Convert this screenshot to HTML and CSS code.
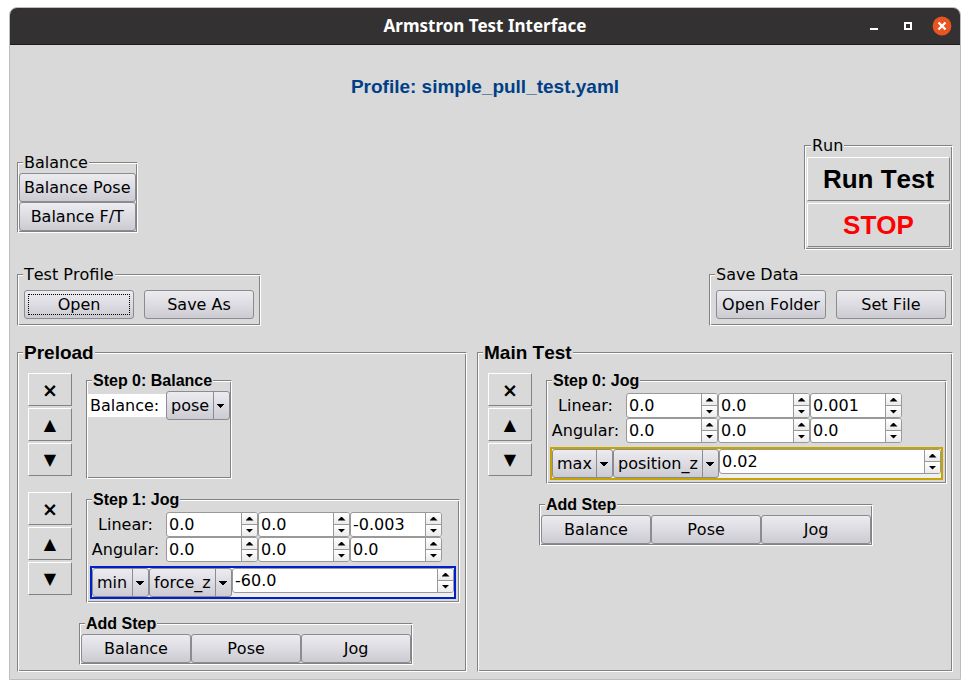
FILE: index.html
```html
<!DOCTYPE html>
<html lang="en">
<head>
<meta charset="utf-8">
<title>Armstron Test Interface</title>
<link rel="stylesheet" href="styles.css">
</head>
<body>
<div class="window">
  <header class="titlebar">
    <h1 class="title">Armstron Test Interface</h1>
    <div class="controls">
      <button class="control" aria-label="Minimize"><svg viewBox="0 0 20 20"><path d="M6 12h8v2H6z" fill="#fff"/></svg></button>
      <button class="control" aria-label="Maximize"><svg viewBox="0 0 20 20"><path d="M7 7h6v6H7z" fill="none" stroke="#fff" stroke-width="2"/></svg></button>
      <button class="control" aria-label="Close"><svg viewBox="0 0 20 20"><circle cx="10" cy="10" r="9.4" fill="#e95420"/><path d="M6.5 6.5l7 7M13.5 6.5l-7 7" stroke="#fff" stroke-width="2.4"/></svg></button>
    </div>
  </header>
  <main class="content">
    <h2 class="profile">Profile: simple_pull_test.yaml</h2>

    <div class="row row-run">
      <fieldset class="group stack">
        <legend>Balance</legend>
        <button class="btn">Balance Pose</button>
        <button class="btn">Balance F/T</button>
      </fieldset>
      <fieldset class="group stack run">
        <legend>Run</legend>
        <button class="flat big">Run Test</button>
        <button class="flat big stop">STOP</button>
      </fieldset>
    </div>

    <div class="row row-files">
      <fieldset class="group">
        <legend>Test Profile</legend>
        <div class="pair">
          <button class="btn focused">Open</button>
          <button class="btn">Save As</button>
        </div>
      </fieldset>
      <fieldset class="group">
        <legend>Save Data</legend>
        <div class="pair">
          <button class="btn">Open Folder</button>
          <button class="btn">Set File</button>
        </div>
      </fieldset>
    </div>

    <div class="panels">
      <fieldset class="group panel">
        <legend class="heading">Preload</legend>
        <div class="steps">
          <div class="step">
            <div class="tools">
              <button class="flat tool remove" aria-label="Remove step">×</button>
              <button class="flat tool" aria-label="Move up">▲</button>
              <button class="flat tool" aria-label="Move down">▼</button>
            </div>
            <fieldset class="group balance">
              <legend class="subheading">Step 0: Balance</legend>
              <div class="balance-row">
                <label class="white" for="bal">Balance:</label>
                <select class="combo" id="bal"><option>pose</option></select>
              </div>
            </fieldset>
          </div>
          <div class="step">
            <div class="tools">
              <button class="flat tool remove" aria-label="Remove step">×</button>
              <button class="flat tool" aria-label="Move up">▲</button>
              <button class="flat tool" aria-label="Move down">▼</button>
            </div>
            <fieldset class="group">
              <legend class="subheading">Step 1: Jog</legend>
              <div class="jog">
                <div class="vector">
                  <label for="p-lx">Linear:</label>
                  <span class="spin"><input id="p-lx" value="0.0"><button class="up" aria-label="Increase"></button><button class="down" aria-label="Decrease"></button></span>
                  <span class="spin"><input aria-label="Linear y" value="0.0"><button class="up" aria-label="Increase"></button><button class="down" aria-label="Decrease"></button></span>
                  <span class="spin"><input aria-label="Linear z" value="-0.003"><button class="up" aria-label="Increase"></button><button class="down" aria-label="Decrease"></button></span>
                  <label for="p-ax">Angular:</label>
                  <span class="spin"><input id="p-ax" value="0.0"><button class="up" aria-label="Increase"></button><button class="down" aria-label="Decrease"></button></span>
                  <span class="spin"><input aria-label="Angular y" value="0.0"><button class="up" aria-label="Increase"></button><button class="down" aria-label="Decrease"></button></span>
                  <span class="spin"><input aria-label="Angular z" value="0.0"><button class="up" aria-label="Increase"></button><button class="down" aria-label="Decrease"></button></span>
                </div>
                <div class="condition blue">
                  <select class="combo" aria-label="Condition"><option>min</option></select>
                  <select class="combo" aria-label="Signal"><option>force_z</option></select>
                  <span class="spin wide"><input aria-label="Limit" value="-60.0"><button class="up" aria-label="Increase"></button><button class="down" aria-label="Decrease"></button></span>
                </div>
              </div>
            </fieldset>
          </div>
          <fieldset class="group add">
            <legend class="subheading">Add Step</legend>
            <div class="trio">
              <button class="btn">Balance</button>
              <button class="btn">Pose</button>
              <button class="btn">Jog</button>
            </div>
          </fieldset>
        </div>
      </fieldset>

      <fieldset class="group panel">
        <legend class="heading">Main Test</legend>
        <div class="steps">
          <div class="step">
            <div class="tools">
              <button class="flat tool remove" aria-label="Remove step">×</button>
              <button class="flat tool" aria-label="Move up">▲</button>
              <button class="flat tool" aria-label="Move down">▼</button>
            </div>
            <fieldset class="group">
              <legend class="subheading">Step 0: Jog</legend>
              <div class="jog">
                <div class="vector">
                  <label for="m-lx">Linear:</label>
                  <span class="spin"><input id="m-lx" value="0.0"><button class="up" aria-label="Increase"></button><button class="down" aria-label="Decrease"></button></span>
                  <span class="spin"><input aria-label="Linear y" value="0.0"><button class="up" aria-label="Increase"></button><button class="down" aria-label="Decrease"></button></span>
                  <span class="spin"><input aria-label="Linear z" value="0.001"><button class="up" aria-label="Increase"></button><button class="down" aria-label="Decrease"></button></span>
                  <label for="m-ax">Angular:</label>
                  <span class="spin"><input id="m-ax" value="0.0"><button class="up" aria-label="Increase"></button><button class="down" aria-label="Decrease"></button></span>
                  <span class="spin"><input aria-label="Angular y" value="0.0"><button class="up" aria-label="Increase"></button><button class="down" aria-label="Decrease"></button></span>
                  <span class="spin"><input aria-label="Angular z" value="0.0"><button class="up" aria-label="Increase"></button><button class="down" aria-label="Decrease"></button></span>
                </div>
                <div class="condition gold">
                  <select class="combo" aria-label="Condition"><option>max</option></select>
                  <select class="combo" aria-label="Signal"><option>position_z</option></select>
                  <span class="spin wide"><input aria-label="Limit" value="0.02"><button class="up" aria-label="Increase"></button><button class="down" aria-label="Decrease"></button></span>
                </div>
              </div>
            </fieldset>
          </div>
          <fieldset class="group add">
            <legend class="subheading">Add Step</legend>
            <div class="trio">
              <button class="btn">Balance</button>
              <button class="btn">Pose</button>
              <button class="btn">Jog</button>
            </div>
          </fieldset>
        </div>
      </fieldset>
    </div>
  </main>
</div>
</body>
</html>
```
FILE: styles.css
```css
:root {
  --face: #d9d9d9;
  --shade: #828282;
  --edge: #8b8c90;
}

* {
  box-sizing: border-box;
}

body {
  margin: 0;
  padding: 7px 9px 9px;
  background: #fff;
  color: #000;
  font: 16px/20px "DejaVu Sans", sans-serif;
}

button,
input,
select {
  margin: 0;
  font: inherit;
  color: inherit;
}

.window {
  border: 1px solid #bdbdbd;
  border-radius: 8px 8px 0 0;
  background: var(--face);
  overflow: hidden;
}

.titlebar {
  display: grid;
  grid-template-columns: 1fr auto 1fr;
  align-items: center;
  height: 37px;
  padding: 0 8px;
  background: #333132;
  border-bottom: 1px solid #1c1b1b;
}

.title {
  grid-column: 2;
  margin: 0;
  color: #fff;
  font: bold 17px/26px "Noto Sans", sans-serif;
}

.controls {
  display: flex;
  justify-content: flex-end;
  gap: 14px;
}

.control {
  width: 20px;
  height: 20px;
  padding: 0;
  border: 0;
  background: none;
}

.control svg {
  display: block;
}

.content {
  padding: 30px 7px 7px;
}

.profile {
  margin: 0 0 37px;
  text-align: center;
  color: #003f87;
  font: bold 19px/24px "Liberation Sans", sans-serif;
  font-kerning: none;
}

.row {
  display: flex;
  justify-content: space-between;
  align-items: center;
}

.row-run {
  margin-bottom: 15px;
}

.row-files {
  margin-bottom: 17px;
}

/* Etched frame: the border is the outer line, the inset shadow the inner one. */
.group {
  min-width: 0;
  margin: 0;
  padding: 1px;
  border: 1px solid;
  border-color: var(--shade) #fff #fff var(--shade);
  box-shadow: inset 1px 1px #fff, inset -1px -1px var(--shade);
}

.group > legend {
  height: 19px;
  margin-left: 4px;
  padding: 0 1px;
  background: var(--face);
  font-kerning: none;
  white-space: nowrap;
}

.group > .heading {
  font: bold 19px/20px "Liberation Sans", sans-serif;
  font-kerning: none;
}

.group > .subheading {
  font: bold 16px/20px "Liberation Sans", sans-serif;
}

.stack > button {
  display: block;
  width: 100%;
}

.btn {
  width: 110px;
  height: 29px;
  padding: 0 4px;
  border: 1px solid var(--edge);
  border-radius: 3px;
  background: linear-gradient(#ebebf0, #dcdce2 50%, #cbcbd1);
  font-kerning: none;
  white-space: nowrap;
}

.focused {
  outline: 1px dotted #000;
  outline-offset: -5px;
}

.flat {
  padding: 0;
  border: 1px solid;
  border-color: #fff var(--shade) var(--shade) #fff;
  background: var(--face);
  font-weight: bold;
}

.run {
  width: 149px;
  padding: 1px 2px 2px;
}

.big {
  height: 44px;
  margin-top: 1px;
  font: bold 26px/32px "Liberation Sans", sans-serif;
  font-kerning: none;
}

.stop {
  margin-top: 2px;
  color: #f00;
}

.pair {
  display: flex;
  gap: 10px;
  padding: 5px;
}

.trio {
  display: flex;
}

.panels {
  display: grid;
  grid-template-columns: auto 1fr;
  gap: 10px;
}

.steps {
  display: flex;
  flex-direction: column;
  align-items: flex-start;
  gap: 11px;
  padding: 8px 5px 5px 9px;
}

.step {
  display: flex;
  align-items: flex-start;
  gap: 14px;
}

.tools {
  display: flex;
  flex-direction: column;
  gap: 2px;
  padding-top: 2px;
}

.tool {
  width: 44px;
  height: 33px;
}

.remove {
  font-size: 19px;
}

.add {
  margin-left: 51px;
}

.balance {
  width: 146px;
  min-height: 108px;
}

.balance-row {
  display: flex;
  align-items: center;
}

.white {
  width: 78px;
  padding: 2px 2px 1px;
  background: #fff;
}

.combo {
  appearance: none;
  height: 29px;
  padding: 0 20px 0 4px;
  border: 1px solid var(--edge);
  border-radius: 3px;
  background:
    conic-gradient(from -45deg at 50% 100%, #000 90deg, transparent 0) right 4px center / 8px 4px no-repeat,
    linear-gradient(var(--edge), var(--edge)) right 15px top / 1px 100% no-repeat,
    linear-gradient(#ebebf0, #dcdce2 50%, #cbcbd1);
}

.balance-row .combo {
  flex: 1;
  min-width: 0;
}

.jog {
  display: flex;
  flex-direction: column;
  gap: 4px;
  padding: 2px;
}

.vector {
  display: grid;
  grid-template-columns: 76px repeat(3, 92px);
  align-items: center;
}

.vector label {
  padding-right: 5px;
  text-align: center;
}

.spin {
  display: grid;
  grid-template-columns: 1fr 16px;
  grid-template-rows: 12px 11px;
  height: 25px;
  border: 1px solid #999;
  border-radius: 3px;
  background: #fff;
  overflow: hidden;
}

.spin input {
  grid-row: 1 / 3;
  width: 100%;
  min-width: 0;
  padding: 0 2px;
  border: 0;
  background: none;
}

.spin button {
  display: flex;
  align-items: center;
  justify-content: center;
  grid-column: 2;
  padding: 0;
  border: 0;
  border-left: 1px solid #999;
  background: linear-gradient(#fff, #ebebeb);
}

.spin .up {
  border-bottom: 1px solid #999;
}

.spin button::before {
  content: "";
  width: 8px;
  height: 4px;
  background: #000;
}

.up::before {
  clip-path: polygon(50% 0, 100% 100%, 0 100%);
}

.down::before {
  clip-path: polygon(0 0, 100% 0, 50% 100%);
}

.wide {
  width: 222px;
}

.condition {
  display: flex;
  align-items: flex-start;
  border: 2px solid;
  background: #efefef;
}

.blue {
  border-color: #0020c8;
}

.gold {
  border-color: #c8a400;
}
```
